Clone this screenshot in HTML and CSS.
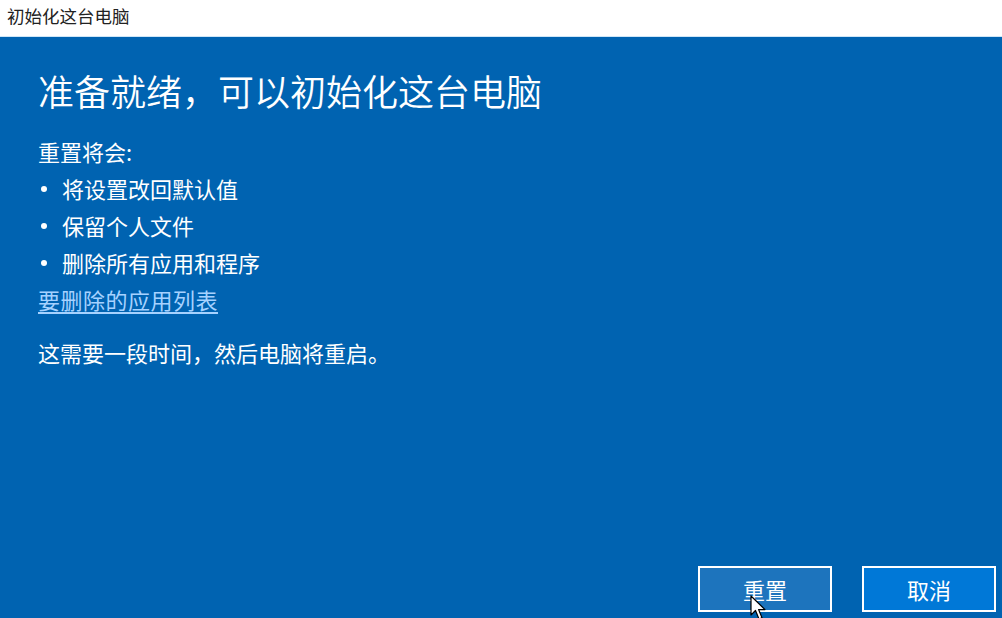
FILE: index.html
```html
<!DOCTYPE html>
<html lang="zh-CN">
<head>
    <meta charset="UTF-8">
    <title>初始化这台电脑</title>
    <link rel="stylesheet" href="styles.css">
</head>
<body>
    <div class="title-bar">初始化这台电脑</div>

    <div class="panel">
        <h1>准备就绪，可以初始化这台电脑</h1>

        <p class="line">重置将会:</p>
        <ul class="reset-list">
            <li>将设置改回默认值</li>
            <li>保留个人文件</li>
            <li>删除所有应用和程序</li>
        </ul>
        <a class="line app-link" href="#">要删除的应用列表</a>

        <p class="line note">这需要一段时间，然后电脑将重启。</p>

        <!-- Buttons -->
        <div class="actions">
            <button class="btn btn-reset">重置</button>
            <button class="btn btn-cancel">取消</button>
        </div>

        <svg class="cursor" width="18" height="26" viewBox="0 0 18 26">
            <path d="M1 1 L1 20 L5.5 15.5 L9 24 L12 22.8 L8.6 14.6 L15 14.6 Z" fill="#fff" stroke="#000" stroke-width="1.2" stroke-linejoin="round"/>
        </svg>
    </div>
</body>
</html>
```

FILE: styles.css
```css
/* General Styles */
html, body {
    height: 100%;
}

body {
    margin: 0;
    font-family: "Noto Sans CJK SC", "Noto Sans", sans-serif;
    background-color: #fff;
    display: flex;
    flex-direction: column;
    overflow: hidden;
}

.title-bar {
    height: 37px;
    line-height: 31px;
    padding-left: 7px;
    font-size: 17.5px;
    color: #222;
    background-color: #fff;
    border-bottom: 1px solid #cfe6f7;
    box-sizing: border-box;
}

.panel {
    position: relative;
    flex: 1;
    display: flex;
    flex-direction: column;
    align-items: flex-start;
    background-color: #0063b1;
    color: #fff;
    padding: 29px 6px 6px 38px;
}

h1 {
    margin: 0 0 19px;
    font-size: 36px;
    font-weight: 350;
    line-height: 48px;
}

.line {
    margin: 0;
    font-size: 22px;
    line-height: 37px;
}

.reset-list {
    margin: 0;
    padding: 0;
    list-style: none;
}

.reset-list li {
    position: relative;
    padding-left: 24px;
    font-size: 22px;
    line-height: 37px;
}

.reset-list li::before {
    content: "";
    position: absolute;
    left: 3px;
    top: 16px;
    width: 6px;
    height: 6px;
    border-radius: 50%;
    background-color: #fff;
}

.app-link {
    color: #a6d2ff;
    text-decoration: underline;
    text-underline-offset: 3px;
    letter-spacing: 0.5px;
}

.note {
    margin-top: 16px;
}

.actions {
    margin-top: auto;
    align-self: flex-end;
    display: flex;
    gap: 30px;
}

.btn {
    width: 134px;
    height: 46px;
    border: 2px solid #fff;
    color: #fff;
    font-family: inherit;
    font-size: 22px;
    padding: 0;
    cursor: pointer;
}

.btn-reset {
    background-color: #1d74bd;
}

.btn-cancel {
    background-color: #0078d7;
}

.cursor {
    position: absolute;
    left: 750px;
    top: 558px;
}
```
